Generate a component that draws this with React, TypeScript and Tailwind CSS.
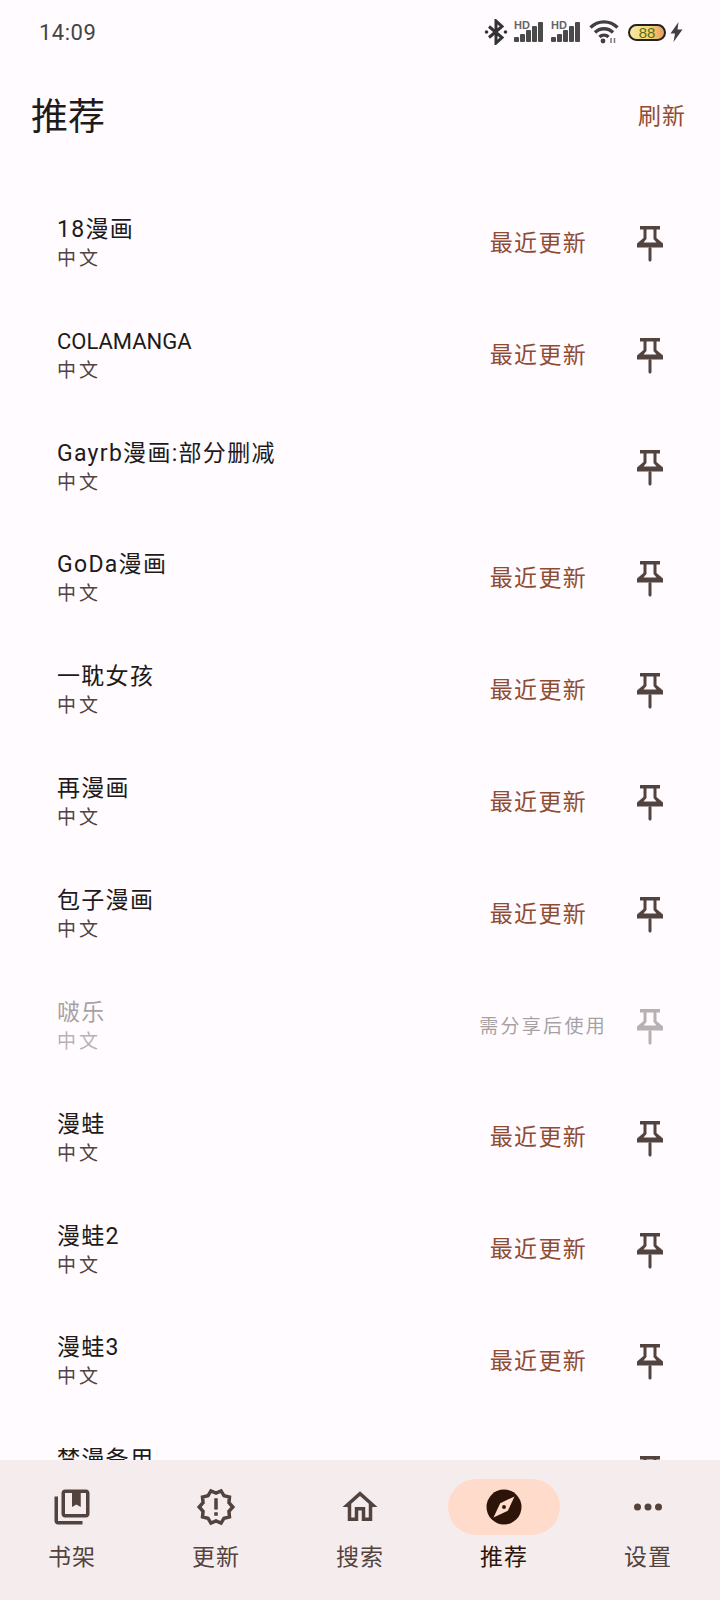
import type { ReactNode } from 'react';

const FONT = "font-['Roboto','Noto_Sans_CJK_SC',sans-serif]";

const sources = [
  { name: '18漫画', action: '最近更新' },
  { name: 'COLAMANGA', action: '最近更新', tight: true },
  { name: 'Gayrb漫画:部分删减' },
  { name: 'GoDa漫画', action: '最近更新' },
  { name: '一耽女孩', action: '最近更新' },
  { name: '再漫画', action: '最近更新' },
  { name: '包子漫画', action: '最近更新' },
  { name: '啵乐', note: '需分享后使用', disabled: true },
  { name: '漫蛙', action: '最近更新' },
  { name: '漫蛙2', action: '最近更新' },
  { name: '漫蛙3', action: '最近更新' },
  { name: '梵漫备用', action: '最近更新' },
];

function PinIcon() {
  return (
    <svg width="26" height="36" viewBox="0 0 26 36" fill="currentColor">
      <path fillRule="evenodd" d="M3 0h20v3.500h-3.500V12l6.500 5.500v4H0v-4L6.500 12V3.500H3zM9.500 3.500V13l-3 3.500h13l-3-3.500V3.500z" />
      <rect x="11.500" y="21" width="3" height="14.500" rx="1.500" />
    </svg>
  );
}

function Signal() {
  return (
    <div className="relative w-[30px] h-[22px]">
      <span className="absolute left-0 top-[-1px] text-[11px] leading-[11px] font-bold text-[#666] font-['Liberation_Sans',sans-serif]">HD</span>
      <svg className="absolute inset-0" width="30" height="22" viewBox="0 0 30 22" fill="#4a4a4a">
        <rect x="0" y="16" width="5" height="5" rx="1" />
        <rect x="6" y="13" width="5" height="8" rx="1" />
        <rect x="12" y="9" width="5" height="12" rx="1" />
        <rect x="18" y="5" width="5" height="16" rx="1" />
        <rect x="24" y="1" width="5" height="20" rx="1" />
      </svg>
    </div>
  );
}

function StatusBar() {
  return (
    <div className="h-[62px] shrink-0 flex items-center justify-between pl-[39px] pr-[37px] pt-[2px]">
      <span className="text-[22px] tracking-[0.5px] text-[#444]">14:09</span>
      <div className="flex items-center">
        <svg width="24" height="26" viewBox="0 0 24 26" fill="none" stroke="#333" strokeWidth="3">
          <path d="M5 7.500l13 11-6 5.500V2l6 5.500-13 11" />
          <circle cx="2.500" cy="13" r="1.800" fill="#333" stroke="none" />
          <circle cx="21.500" cy="13" r="1.800" fill="#333" stroke="none" />
        </svg>
        <div className="flex gap-[7px] ml-[6px]">
          <Signal />
          <Signal />
        </div>
        <svg className="ml-[8px]" width="30" height="26" viewBox="0 0 30 26" fill="none" stroke="#404040" strokeWidth="3.400">
          <path d="M1.500 8.500C9 1 21 1 28.500 8.500" />
          <path d="M6 13.500c5-5 13-5 18 0" />
          <path d="M10.500 18c2.500-2.500 6.500-2.500 9 0" />
          <circle cx="14" cy="22" r="2.400" fill="#404040" stroke="none" />
          <path d="M22 19v5M25.500 19v5" strokeWidth="1.500" stroke="#777" />
        </svg>
        <div className="ml-[9px] w-[38px] h-[17px] rounded-full border-2 border-[#222] bg-[linear-gradient(90deg,#f7e8a0,#f4d77a_55%,#eb9b5c)] flex items-center justify-center">
          <span className="text-[15px] leading-none text-[#5f6a10] font-['Liberation_Sans',sans-serif]">88</span>
        </div>
        <svg className="ml-[4px]" width="13" height="20" viewBox="0 0 13 20" fill="#404040">
          <path d="M8.500 0L0.500 11.500h4.500L3.500 20l9-12.500H7.500z" />
        </svg>
      </div>
    </div>
  );
}

function SourceRow({ name, action, note, disabled, tight }: { name: string; action?: string; note?: string; disabled?: boolean; tight?: boolean }) {
  return (
    <div className={`h-[111.85px] shrink-0 flex items-center pl-[57px] pr-[57px] ${disabled ? 'opacity-40' : ''}`}>
      <div className="flex-1 min-w-0">
        <div className={`leading-[28px] text-[#201a18] ${tight ? 'text-[22px] tracking-[0px]' : 'text-[23px] tracking-[1.3px]'}`}>{name}</div>
        <div className="mt-[2px] text-[19px] leading-[26px] tracking-[3px] text-[#53433f]">中文</div>
      </div>
      <div className="flex items-center">
        {action && <span className="text-[23px] tracking-[1.3px] text-[#8f4c34] mr-[50px]">{action}</span>}
        {note && <span className="text-[19px] tracking-[2.3px] text-[#201a18] mr-[30px]">{note}</span>}
      </div>
      <span className="text-[#53433f] flex">
        <PinIcon />
      </span>
    </div>
  );
}

function NavItem({ icon, label, active }: { icon: ReactNode; label: string; active?: boolean }) {
  return (
    <div className="flex-1 flex flex-col items-center pt-[19px]">
      <div className={`w-[112px] h-[56px] rounded-full flex items-center justify-center ${active ? 'bg-[#ffdbcc]' : ''}`}>
        {icon}
      </div>
      <span className={`mt-[8px] text-[23px] leading-[30px] tracking-[1px] ${active ? 'text-[#2d1409]' : 'text-[#53433f]'}`}>
        {label}
      </span>
    </div>
  );
}

const navIcon = 'w-[42px] h-[42px] fill-[#53433f]';

export default function App() {
  return (
    <div className={`w-[720px] h-[1600px] overflow-hidden flex flex-col bg-[#fffbff] ${FONT}`}>
      <StatusBar />

      {/* Title bar */}
      <div className="h-[104px] shrink-0 flex items-center justify-between pl-[31px] pr-[34px] pt-[10px] mt-[-2px]">
        <h1 className="text-[37px] font-normal leading-none text-[#201a18]">推荐</h1>
        <span className="text-[23px] tracking-[1px] text-[#8f4c34]">刷新</span>
      </div>

      {/* Source list */}
      <div className="flex-1 min-h-0 overflow-hidden flex flex-col pt-[24px]">
        {sources.map((s) => (
          <SourceRow key={s.name} {...s} />
        ))}
      </div>

      {/* Bottom navigation */}
      <div className="h-[140px] shrink-0 flex bg-[#f5eded]">
        <NavItem
          label="书架"
          icon={
            <svg viewBox="0 0 24 24" className={navIcon}>
              <path d="M4 6H2v14c0 1.100.9 2 2 2h14v-2H4V6zm16-4H8c-1.100 0-2 .9-2 2v12c0 1.100.9 2 2 2h12c1.100 0 2-.9 2-2V4c0-1.100-.9-2-2-2zm0 14H8V4h4v8l2.500-1.500L17 12V4h3v12z" />
            </svg>
          }
        />
        <NavItem
          label="更新"
          icon={
            <svg viewBox="0 0 24 24" className={navIcon}>
              <path
                fill="none"
                stroke="#53433f"
                strokeWidth="2"
                d="M12 4.100l2.900-1.300 1.700 2.800 3.100.7-.3 3.200L21.600 12l-2.200 2.500.3 3.200-3.100.7-1.700 2.800-2.900-1.300-2.900 1.300-1.700-2.800-3.100-.7.3-3.200L2.400 12l2.200-2.500-.3-3.200 3.100-.7 1.700-2.800z"
              />
              <rect x="11" y="7" width="2" height="6.500" />
              <rect x="11" y="15" width="2" height="2" />
            </svg>
          }
        />
        <NavItem
          label="搜索"
          icon={
            <svg viewBox="0 0 24 24" className={navIcon}>
              <path d="M12 5.690l5 4.500V18h-2v-6H9v6H7v-7.810l5-4.500M12 3L2 12h3v8h6v-6h2v6h6v-8h3L12 3z" />
            </svg>
          }
        />
        <NavItem
          label="推荐"
          active
          icon={
            <svg viewBox="0 0 24 24" className="w-[42px] h-[42px]">
              <circle cx="12" cy="12" r="10" fill="#2d1409" />
              <path d="M18 6l-3.810 8.190L6 18l3.810-8.190z" fill="#ffdbcc" />
              <circle cx="12" cy="12" r="1.100" fill="#2d1409" />
            </svg>
          }
        />
        <NavItem
          label="设置"
          icon={
            <svg viewBox="0 0 24 24" className={navIcon}>
              <circle cx="6" cy="12" r="2" />
              <circle cx="12" cy="12" r="2" />
              <circle cx="18" cy="12" r="2" />
            </svg>
          }
        />
      </div>
    </div>
  );
}
